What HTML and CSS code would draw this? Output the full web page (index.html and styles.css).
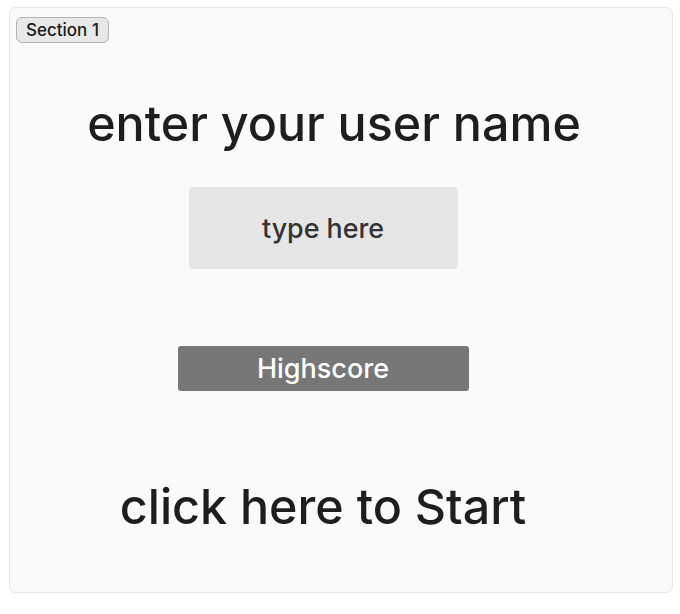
FILE: index.html
```html
<!DOCTYPE html>
<html>
<head>
<meta charset="utf-8">
<link rel="stylesheet" href="styles.css">
</head>
<body>
<div class="card">
  <div class="badge">Section 1</div>
  <div class="content">
    <div class="title title-top">enter your user name</div>
    <div class="input">type here</div>
    <div class="btn">Highscore</div>
    <div class="title title-bottom">click here to Start</div>
  </div>
</div>
</body>
</html>
```
FILE: styles.css
```css
html, body {
  margin: 0;
  padding: 0;
  background: #ffffff;
  font-family: Inter, "Noto Sans", sans-serif;
}
.card {
  position: relative;
  margin: 7px 0 0 9px;
  width: 664px;
  height: 586px;
  box-sizing: border-box;
  background: #fafafa;
  border: 1px solid #e6e6e6;
  border-radius: 7px;
  padding: 9px 0 0 6px;
}
.badge {
  display: inline-block;
  box-sizing: border-box;
  height: 26px;
  padding: 0 9px;
  line-height: 24px;
  font-size: 17px;
  font-weight: 500;
  color: #1a1a1a;
  background: #e8e8e8;
  border: 1px solid #b5b5b5;
  border-radius: 6px;
}
.content {
  width: 614px;
  display: flex;
  flex-direction: column;
  align-items: center;
}
.title {
  font-size: 48.4px;
  font-weight: 500;
  color: #1e1e1e;
  line-height: 58px;
  white-space: nowrap;
}
.title-top {
  margin-top: 52px;
  margin-left: 22px;
}
.input {
  margin-top: 34px;
  width: 269px;
  height: 82px;
  background: #e6e6e6;
  border-radius: 3px;
  display: flex;
  align-items: center;
  justify-content: center;
  font-size: 26.8px;
  font-weight: 500;
  color: #333333;
}
.btn {
  margin-top: 77px;
  width: 291px;
  height: 45px;
  background: #777777;
  border-radius: 3px;
  color: #ffffff;
  font-size: 27px;
  font-weight: 500;
  display: flex;
  align-items: center;
  justify-content: center;
}
.title-bottom {
  margin-top: 87px;
}
```
